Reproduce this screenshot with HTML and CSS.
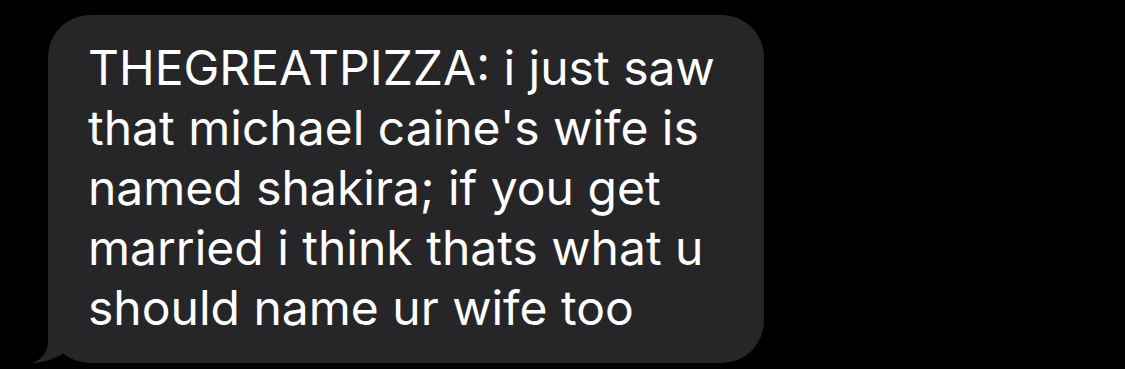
FILE: index.html
```html
<!DOCTYPE html>
<html lang="en">
<head>
    <meta charset="UTF-8">
    <meta name="viewport" content="width=device-width, initial-scale=1.0">
    <title>Message</title>
    <link rel="stylesheet" href="styles.css">
</head>
<body>

    <div class="thread">

        <!-- incoming message bubble -->
        <div class="bubble">
            <svg class="tail" width="80" height="40" viewBox="0 0 80 40">
                <path d="M20,0 L20,17 C20,29 15,36 4,40 C16,40 26,36 38,29 C46,36 56,40 72,40 L80,40 L80,0 Z" fill="#262628"/>
            </svg>

            <p class="bubble-text">THEGREATPIZZA: i just saw<br>
            that michael caine's wife is<br>
            named shakira; if you get<br>
            married i think thats what u<br>
            should name ur wife too</p>
        </div>

    </div>

</body>
</html>
```

FILE: styles.css
```css
body {
    margin: 0;
    padding: 0;
    background-color: #000;
    font-family: "Liberation Sans", Arial, sans-serif;
}
.thread {
    padding: 15px 0 0 48px;
}
.bubble {
    position: relative;
    width: 716px;
    height: 348px;
    box-sizing: border-box;
    padding: 23px 0 0 40px;
    background-color: #262628;
    border-radius: 42px;
}
.bubble-text {
    position: relative;
    margin: 0;
    color: #fff;
    font-family: Inter, "Liberation Sans", sans-serif;
    font-size: 48px;
    line-height: 60px;
}
.tail {
    position: absolute;
    left: -20px;
    bottom: 0;
}
```
